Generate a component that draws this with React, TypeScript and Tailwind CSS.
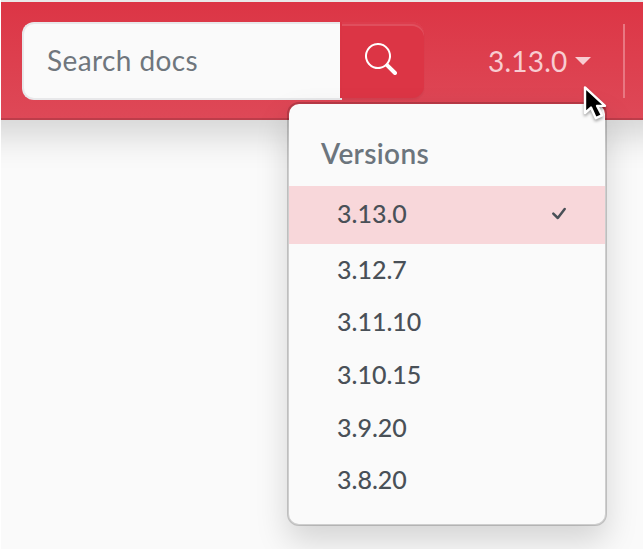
const versions = ["3.13.0", "3.12.7", "3.11.10", "3.10.15", "3.9.20", "3.8.20"];

function SearchIcon() {
  return (
    <svg width="32" height="32" viewBox="0 0 16 16" fill="white">
      <path d="M11.742 10.344a6.5 6.5 0 1 0-1.397 1.398h-.001q.044.06.098.115l3.85 3.85a1 1 0 0 0 1.415-1.414l-3.85-3.85a1 1 0 0 0-.115-.1zM12 6.5a5.5 5.5 0 1 1-11 0 5.5 5.5 0 0 1 11 0" />
    </svg>
  );
}

function CheckIcon() {
  return (
    <svg width="16" height="14" viewBox="0 0 16 14" fill="none" stroke="#495057" strokeWidth="2.5" strokeLinecap="round" strokeLinejoin="round">
      <path d="M2.3 6.7 6.8 11 13.7 2" />
    </svg>
  );
}

function Header() {
  return (
    <header className="flex h-[118px] items-start border-b-2 border-[#bd3d4a] bg-linear-to-b from-[#dc3545] to-[#de4857] pl-[21px] pt-5 shadow-[0_-16px_32px_32px_rgba(0,0,0,0.15)]">
      <div className="flex h-[78px] w-[318px] items-center rounded-l-[12px] border-y-2 border-l-2 border-[#e8e8ea] bg-[#fafafa] pb-[2px] pl-[23px]">
        <span className="whitespace-nowrap text-[28px] leading-[40px] tracking-[0.4px] text-[#6f767d]">Search docs</span>
      </div>
      <div className="h-[78px] w-[2px] border-b-2 border-[#e8e8ea] bg-[#dc3545]" />
      <button className="flex h-[76px] w-[82px] items-start rounded-r-[12px] bg-[#dc3545] pl-[23px] pt-[21px] shadow-[inset_0_2px_0_#dd3d4d,inset_0_4px_0_#e04f5d,0_2px_2px_rgba(0,0,0,0.05)]" aria-label="Search">
        <SearchIcon />
      </button>
      <div className="ml-[64px] flex h-[78px] items-center gap-[6px] text-[#f8ccd1]">
        <span className="w-[81px] whitespace-nowrap text-[28px] leading-[40px] tracking-[0.2px]">3.13.0</span>
        <svg width="16" height="8" viewBox="0 0 16 8" fill="currentColor"><path d="M0 0H16L8 8Z" /></svg>
      </div>
      <div className="ml-[32px] mt-[2px] h-[74px] w-[2px] bg-[#e97782]" />
    </header>
  );
}

function VersionMenu() {
  return (
    <div className="absolute left-[287px] top-[102px] h-[424px] w-[320px] rounded-[12px] border-2 border-black/[0.175] bg-[#fafafa] bg-clip-padding pt-[29px] shadow-[0_16px_32px_rgba(0,0,0,0.15)]">
      <h6 className="h-[53px] pl-8 text-[28px] font-semibold leading-[40px] tracking-[0.35px] text-[#6c757d]">Versions</h6>
      <ul className="text-[25px] font-medium text-[#495057]">
        {versions.map((version, i) => (
          <li
            key={version}
            className={i === 0 ? "flex h-[58px] items-center justify-between bg-[#f8d7da] pb-[2px] pl-[48px] pr-[38px]" : "flex h-[52.7px] items-center pb-[2px] pl-[48px]"}
          >
            <span>{version}</span>
            {i === 0 && <CheckIcon />}
          </li>
        ))}
      </ul>
    </div>
  );
}

function Pointer() {
  return (
    <svg className="absolute left-[580px] top-[82px]" width="34" height="48" viewBox="0 0 34 48">
      <path d="M5 5.4V31L11 25.6L15.8 36.2L22 33.3L17.1 23.9L25 23.8Z" fill="black" stroke="white" strokeWidth="2.4" strokeLinejoin="round" style={{ filter: "drop-shadow(0 2px 1.5px rgba(0,0,0,.35))" }} />
    </svg>
  );
}

export default function App() {
  return (
    <div className="relative h-[550px] w-[644px] overflow-hidden bg-white px-px pb-px font-['Lato',sans-serif]">
      <div className="h-[549px] overflow-hidden border-t-2 border-[#e9e9e9] bg-[#fafafa]">
        <Header />
        <div className="absolute inset-x-px bottom-px top-0 overflow-hidden">
          <div className="absolute -left-px top-0">
            <VersionMenu />
          </div>
        </div>
      </div>
      <Pointer />
    </div>
  );
}
